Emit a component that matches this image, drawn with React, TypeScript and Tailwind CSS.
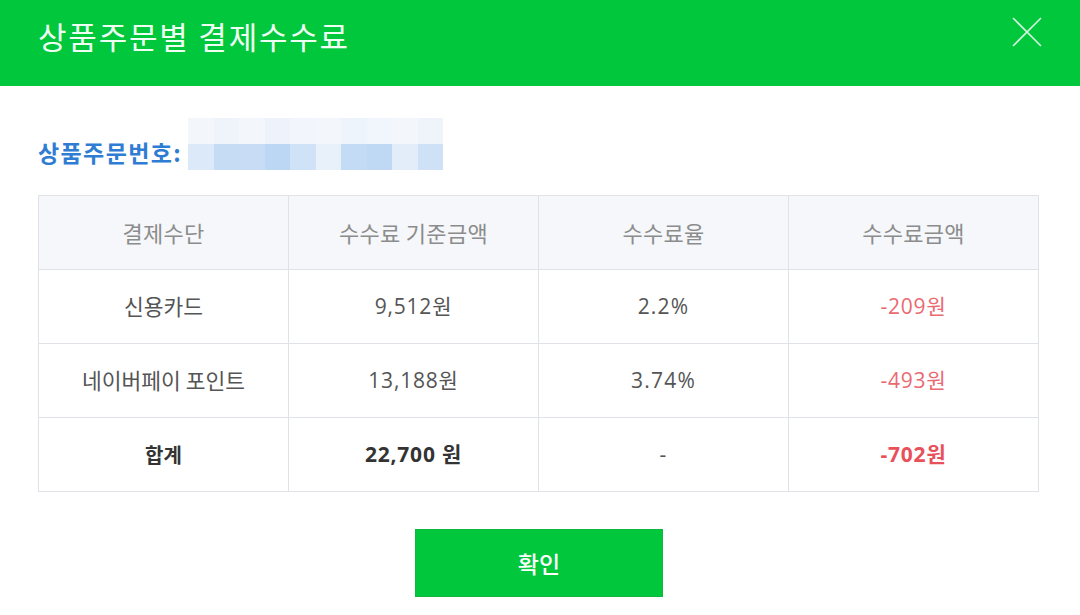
import React from "react";

const font = { fontFamily: '"Noto Sans CJK KR", "Noto Sans", sans-serif' };
const numFont = { fontFamily: '"Open Sans", "Noto Sans CJK KR", sans-serif' };

const blurBottom = ["#dce9f8", "#c6dcf5", "#c8ddf5", "#bcd7f4", "#d0e2f7", "#e8f0fa", "#c4dbf5", "#bfd8f4", "#e2edf9", "#cfe1f7"];
const blurTop = ["#f3f7fc", "#eff4fb", "#f3f7fc", "#eef3fb", "#f2f6fc", "#f3f7fc", "#eef4fb", "#f1f5fc", "#f3f7fc", "#eff4fb"];

const rows = [
  { a: "신용카드", b: "9,512원", c: "2.2%", d: "-209원", bold: false },
  { a: "네이버페이 포인트", b: "13,188원", c: "3.74%", d: "-493원", bold: false },
  { a: "합계", b: "22,700 원", c: "-", d: "-702원", bold: true },
];

export default function App() {
  return (
    <div className="w-[1080px] h-[615px] bg-white overflow-hidden" style={font}>
      <div className="h-[86px] bg-[#00c73c] flex items-start justify-between pl-[38px] pr-[38px] pt-[17px]">
        <div className="text-[31px] leading-[38px] text-[#effff4] tracking-[1.8px]">상품주문별 결제수수료</div>
        <svg width="30" height="30" viewBox="0 0 30 30" className="mt-0">
          <path d="M1 1 L29 29 M29 1 L1 29" stroke="#d4f5de" strokeWidth="1.6" fill="none" />
        </svg>
      </div>

      <div className="flex items-start pl-[38px] mt-[32px]">
        <div className="w-[150px] mt-[19px] text-[23px] leading-[30px] font-bold text-[#2f7dd3] tracking-[1.4px] whitespace-nowrap">상품주문번호:</div>
        <div className="flex flex-col">
          <div className="flex">
            {blurTop.map((c, i) => (
              <div key={i} className="w-[25.5px] h-[26px]" style={{ backgroundColor: c }} />
            ))}
          </div>
          <div className="flex">
            {blurBottom.map((c, i) => (
              <div key={i} className="w-[25.5px] h-[26px]" style={{ backgroundColor: c }} />
            ))}
          </div>
        </div>
      </div>

      <div className="pl-[38px] mt-[25px]">
        <table className="border-collapse w-[1001px] table-fixed">
          <thead>
            <tr className="h-[74px] bg-[#f5f7fa]">
              {["결제수단", "수수료 기준금액", "수수료율", "수수료금액"].map((h) => (
                <th key={h} className="border border-[#dfe3e8] font-normal text-[22px] text-[#8c8c8c] text-center tracking-[0.3px]">
                  {h}
                </th>
              ))}
            </tr>
          </thead>
          <tbody>
            {rows.map((r) => (
              <tr key={r.a} className="h-[74px]">
                <td className={`border border-[#dfe3e8] text-center ${r.bold ? "font-bold text-[#333333] text-[20px]" : "text-[#555555] text-[21.5px]"}`}>{r.a}</td>
                <td style={numFont} className={`border border-[#dfe3e8] text-center text-[21px] tracking-[0.8px] ${r.bold ? "font-bold text-[#333333]" : "text-[#555555]"}`}>{r.b}</td>
                <td style={numFont} className="border border-[#dfe3e8] text-center text-[21px] tracking-[1.2px] text-[#555555]">{r.c}</td>
                <td style={numFont} className={`border border-[#dfe3e8] text-center text-[21px] tracking-[0.8px] ${r.bold ? "font-bold text-[#e8505a]" : "text-[#ea6a72]"}`}>{r.d}</td>
              </tr>
            ))}
          </tbody>
        </table>
      </div>

      <div className="flex justify-center mt-[37px] pr-[2px]">
        <button className="w-[248px] h-[68px] bg-[#00c73c] border border-[#10b83e] text-white text-[23px] font-medium">
          확인
        </button>
      </div>
    </div>
  );
}
